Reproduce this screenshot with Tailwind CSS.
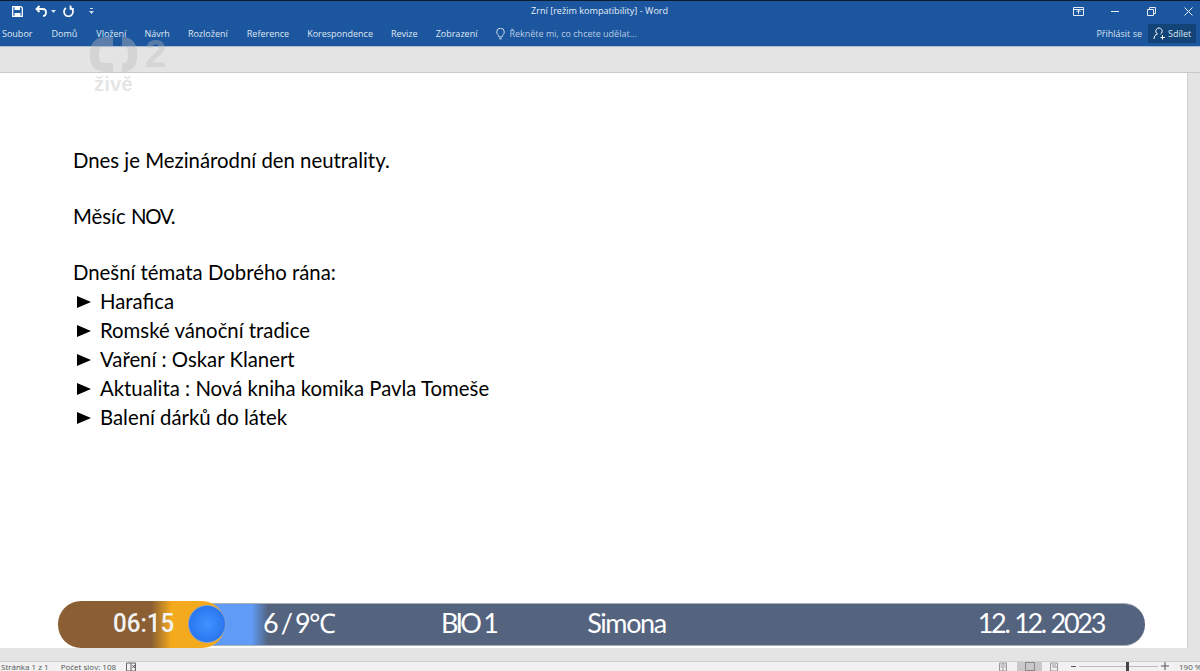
<!DOCTYPE html>
<html lang="en">
<head>
<meta charset="UTF-8">
<script src="https://cdn.jsdelivr.net/npm/@tailwindcss/browser@4"></script>
<title>Zrní - Word</title>
</head>
<body class="relative w-[1200px] h-[671px] overflow-hidden bg-[#e4e4e4] font-['Open_Sans','Liberation_Sans',sans-serif]">
  <!-- title bar + ribbon tabs -->
  <header class="h-[47px] bg-[#1c569f] border-t border-[#0d1c30] border-b-[#a9bbd3] border-b text-white">
    <div class="relative flex items-center h-[20px]">
      <div class="flex items-center pl-[12px]">
        <svg class="w-[11px] h-[11px]" viewBox="0 0 11 11"><path d="M.7.700h8.300l1.300 1.300v8.300H.7z" fill="none" stroke="#fff" stroke-width="1.300"/><path d="M2.500 1h5.500v3H2.500zM2.500 7h6v3h-6z" fill="#fff"/></svg>
        <svg class="w-[13px] h-[12px] ml-[12px]" viewBox="0 0 13 12"><path d="M4.500 1 1.500 4l3 3M2 4h5.500c2.500 0 3.500 1.500 3.500 3.300S10 11 8 11" fill="none" stroke="#fff" stroke-width="1.800"/></svg>
        <svg class="w-[5px] h-[3px] ml-[3px]" viewBox="0 0 5 3"><path d="M0 0h5L2.500 3z" fill="#dce6f2"/></svg>
        <svg class="w-[11px] h-[12px] ml-[7px]" viewBox="0 0 11 12"><path d="M3 3A4.500 4.500 0 1 0 8 3M7.500 .5V4H11" fill="none" stroke="#fff" stroke-width="1.700"/></svg>
        <svg class="w-[5px] h-[6px] ml-[15px]" viewBox="0 0 5 6"><path d="M1 0h3v1H1zM0 3h5L2.500 6z" fill="#cfdcec"/></svg>
      </div>
      <div class="absolute left-[531px] text-[9.100px] text-[#e6edf6] leading-[20px]">Zrní [režim kompatibility] - Word</div>
      <div class="ml-auto flex items-center">
        <svg class="w-[11px] h-[9px] mr-[27px]" viewBox="0 0 11 9"><path d="M.5.500h10v8H.5zM.5 2.500h10" fill="none" stroke="#e6edf6"/><path d="M5.500 3v4M3.500 5l2-2 2 2" fill="none" stroke="#e6edf6"/></svg>
        <div class="w-[8px] h-px bg-[#e6edf6] mr-[28px]"></div>
        <svg class="w-[9px] h-[9px] mr-[28px]" viewBox="0 0 9 9"><path d="M.5 2.500h6v6h-6zM2.500 2.500v-2h6v6h-2" fill="none" stroke="#e6edf6"/></svg>
        <svg class="w-[9px] h-[9px] mr-[7px]" viewBox="0 0 9 9"><path d="M.5.500l8 8M8.500.500l-8 8" fill="none" stroke="#e6edf6"/></svg>
      </div>
    </div>
    <nav class="relative flex items-center h-[25px] text-[9px] text-[#dfe8f3]">
      <span class="ml-[2px]">Soubor</span>
      <span class="ml-[19px]">Domů</span>
      <span class="ml-[19px]">Vložení</span>
      <span class="ml-[18px]">Návrh</span>
      <span class="ml-[18px]">Rozložení</span>
      <span class="ml-[19px]">Reference</span>
      <span class="ml-[18px]">Korespondence</span>
      <span class="ml-[18px]">Revize</span>
      <span class="ml-[18px]">Zobrazení</span>
      <svg class="w-[9px] h-[12px] ml-[19px]" viewBox="0 0 9 12"><path d="M3 9C3 7 .7 6.500.7 4a3.800 3.800 0 0 1 7.600 0C8.300 6.500 6 7 6 9zM3.200 10.800h2.600" fill="none" stroke="#dfe8f3" stroke-width=".9"/></svg>
      <span class="ml-[4px] text-[#b9cbe2]">Řekněte mi, co chcete udělat...</span>
      <div class="ml-auto flex items-center">
        <span class="text-[#d5e1ef] mr-[6px]">Přihlásit se</span>
        <div class="flex items-center h-[19px] w-[48px] bg-[#134477] pl-[5px] mr-[4px]">
          <svg class="w-[13px] h-[13px]" viewBox="0 0 13 13"><path d="M1 12c0-3 1.500-4.500 3.500-5A3.200 3.200 0 1 1 7.500 7M9.500 8v4.500M7.500 10.500h4.500" fill="none" stroke="#fff" stroke-width="1"/></svg>
          <span class="ml-[2px]">Sdílet</span>
        </div>
      </div>
    </nav>
  </header>
  <!-- collapsed ribbon band -->
  <div class="h-[26px] bg-[#e4e4e4] border-b border-[#c9c9c9]"></div>
  <!-- document page -->
  <main class="w-[1188px] h-[575px] bg-white border-r border-[#cfcfcf] pt-[73px] pl-[73px] font-['Lato','Carlito',sans-serif] text-[20.350px] leading-[29px] text-black">
    <p>Dnes je Mezinárodní den neutrality.</p>
    <p class="mt-[27px]">Měsíc <span class="tracking-[-1.300px]">NOV.</span></p>
    <p class="mt-[27px]">Dnešní témata Dobrého rána:</p>
    <ul class="pl-[4px]">
      <li class="flex items-center"><svg class="w-[14px] h-[12px] mr-[9px]" viewBox="0 0 14 12"><path d="M0 0l14 6L0 12z"/></svg>Harafica</li>
      <li class="flex items-center"><svg class="w-[14px] h-[12px] mr-[9px]" viewBox="0 0 14 12"><path d="M0 0l14 6L0 12z"/></svg>Romské vánoční tradice</li>
      <li class="flex items-center"><svg class="w-[14px] h-[12px] mr-[9px]" viewBox="0 0 14 12"><path d="M0 0l14 6L0 12z"/></svg>Vaření : Oskar Klanert</li>
      <li class="flex items-center"><svg class="w-[14px] h-[12px] mr-[9px]" viewBox="0 0 14 12"><path d="M0 0l14 6L0 12z"/></svg>Aktualita : Nová kniha komika Pavla Tomeše</li>
      <li class="flex items-center"><svg class="w-[14px] h-[12px] mr-[9px]" viewBox="0 0 14 12"><path d="M0 0l14 6L0 12z"/></svg>Balení dárků do látek</li>
    </ul>
  </main>
  <!-- status bar -->
  <footer class="h-[10px] mt-[13px] border-t border-[#cfcfcf] bg-[#f1f1f1] text-[8px] leading-[10px] text-[#555] flex overflow-hidden">
    <span class="ml-[1px]">Stránka 1 z 1</span>
    <span class="ml-[12px]">Počet slov: 108</span>
    <svg class="ml-[10px] w-[11px] h-[9px]" viewBox="0 0 11 9"><path d="M.5 1h9v8h-9zM5 1v8M6.500 3l2.500 3M9 3 6.500 6" fill="none" stroke="#666"/></svg>
    <div class="ml-auto flex items-start">
      <svg class="w-[8px] h-[9px] mr-[10px]" viewBox="0 0 8 9"><path d="M.5 1h7v8h-7zM4 1v8M1.500 3h1.500M5 3h1.500M1.500 5h1.500M5 5h1.500" fill="none" stroke="#999"/></svg>
      <div class="w-[25px] h-[9px] bg-[#c8c8c8] flex justify-center mr-[8px]"><div class="w-[10px] h-[9px] border border-[#8a8a8a]"></div></div>
      <svg class="w-[9px] h-[9px] mr-[12px]" viewBox="0 0 9 9"><path d="M.5 1h7v8h-7zM2 3h4M2 5h6" fill="none" stroke="#999"/></svg>
      <div class="w-[5px] h-px bg-[#555] mt-[4px] mr-[3px]"></div>
      <div class="relative w-[79px] h-px bg-[#bbb] mt-[4px] mr-[3px]"><div class="absolute left-[47px] -top-[4px] w-[3px] h-[9px] bg-[#444]"></div></div>
      <svg class="w-[8px] h-[8px] mr-[10px]" viewBox="0 0 8 8"><path d="M4 0v8M0 4h8" stroke="#555"/></svg>
      <span class="w-[21px] whitespace-nowrap">190 %</span>
    </div>
  </footer>
  <!-- TV channel watermark over the document -->
  <div class="absolute left-[90px] top-[37px] w-[80px] h-[60px] text-[#bcbcbc]/40">
    <svg class="absolute left-0 top-0 w-[47px] h-[35px]" viewBox="0 0 47 35"><path d="M23 4.500H15C8.500 4.500 4.500 8.500 4.500 15v5c0 6.500 4 10.500 10.500 10.500h8M32 4.500h1c5.500 0 9.500 4 9.500 10.500v5c0 6.500-4 10.500-9.500 10.500h-1" fill="none" stroke="#bcbcbc" stroke-opacity=".4" stroke-width="9"/></svg>
    <span class="absolute left-[55px] -top-[5px] font-['Liberation_Sans',sans-serif] font-bold text-[38px] leading-[44px]">2</span>
    <span class="absolute left-[4px] top-[35px] font-['Liberation_Sans',sans-serif] font-bold text-[20.500px] leading-[24px]">živě</span>
  </div>
  <!-- TV info strip over the document -->
  <div class="absolute left-[59px] top-[603px] w-[1086px] h-[43px] rounded-[21px] bg-[#54647f] border-y border-[#a9aeb8] font-['Lato','Carlito',sans-serif] text-white">
    <div class="absolute left-[150px] top-0 w-[59px] h-[41px] bg-[linear-gradient(90deg,#5f9bf7_0,#5f9bf7_72%,#54647f_100%)]"></div>
    <div class="absolute -left-px -top-[3px] w-[167px] h-[47px] rounded-[23px] bg-[linear-gradient(90deg,#8b5f33_0,#8b5f33_56%,#f4aa1d_68%,#f4aa1d_100%)]"></div>
    <div class="absolute left-[129px] top-[1px] w-[38px] h-[38px] rounded-full bg-[radial-gradient(circle,#3f94ff_0,#2a76ef_70%,#2668d8_100%)] border border-[#7d9fd8]"></div>
    <span class="absolute left-[54px] top-[3px] font-['Roboto',sans-serif] font-medium text-[26px] leading-[33px] scale-x-[0.93] origin-left text-[#f2f2f2]">06:15</span>
    <div class="relative flex items-center h-[39px] text-[27px] tracking-[-1.400px] [word-spacing:-2px]">
      <span class="ml-[204px]">6 / 9℃</span>
      <span class="ml-[106px] tracking-[-2.800px] [word-spacing:0px]">BIO 1</span>
      <span class="ml-[91px]">Simona</span>
      <span class="ml-auto mr-[41px] tracking-[-2.300px] [word-spacing:1px]">12. 12. 2023</span>
    </div>
  </div>
</body>
</html>
